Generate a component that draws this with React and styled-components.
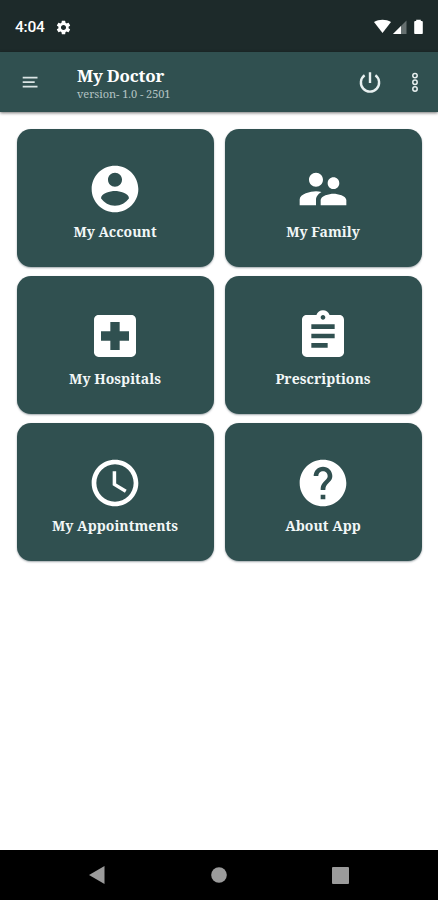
import React from "react";
import styled, { createGlobalStyle } from "styled-components";
import { MdHelp, MdAccessTime, MdAssignment, MdLocalHospital, MdSettings } from "react-icons/md";

const Global = createGlobalStyle`
  * { box-sizing: border-box; }
  body { margin: 0; background: #fff; }
`;
const serif = `"Noto Serif", "Droid Serif", "DejaVu Serif Condensed", "DejaVu Serif", serif`;

const Screen = styled.div`
  display: flex;
  flex-direction: column;
  width: 438px;
  height: 900px;
  overflow: hidden;
  background: #fff;
`;
const StatusBar = styled.header`
  display: flex;
  align-items: center;
  height: 52px;
  flex: none;
  padding: 2px 14px 0 15px;
  background: #1d2a2a;
  color: #fff;
`;
const Time = styled.span`
  width: 30px;
  margin-right: 10px;
  font: 500 15.5px/20px Roboto, sans-serif;
  letter-spacing: -0.2px;
  white-space: nowrap;
`;
const StatusIcons = styled.div`
  display: flex;
  align-items: center;
  margin-left: auto;
`;
const AppBar = styled.div`
  display: flex;
  align-items: center;
  height: 60px;
  flex: none;
  padding: 0 19px 0 22px;
  background: #305050;
  color: #e8f0f0;
  box-shadow: 0 1px 3px rgba(0, 0, 0, 0.55);
`;
const Titles = styled.div`
  margin-left: 39px;
  padding-top: 3px;
`;
const Title = styled.h1`
  margin: 0;
  font: bold 17px/20px ${serif};
  letter-spacing: -0.22px;
  color: #fff;
  white-space: nowrap;
`;
const Version = styled.div`
  font: 11px/16px ${serif};
  letter-spacing: -0.05px;
  color: #b4c3c3;
  white-space: nowrap;
`;
const Actions = styled.div`
  display: flex;
  align-items: center;
  gap: 28px;
  margin-left: auto;
`;
const Content = styled.main`
  flex: 1;
  padding: 17px 16.5px;
`;
const Grid = styled.div`
  display: grid;
  grid-template-columns: 1fr 1fr;
  grid-auto-rows: 138px;
  gap: 9px 11px;
`;
const Card = styled.button`
  display: flex;
  flex-direction: column;
  align-items: center;
  padding: 31.5px 0 0;
  border: 0;
  border-radius: 14px;
  background: #305050;
  color: #fff;
  box-shadow: 0 1px 2px rgba(20, 40, 50, 0.4);
`;
const CardLabel = styled.span`
  margin-top: 5.5px;
  font: bold 14px/20px ${serif};
  letter-spacing: 0.02px;
  color: #f2f7f7;
  white-space: nowrap;
`;
const NavBar = styled.nav`
  display: flex;
  align-items: center;
  justify-content: space-between;
  height: 50px;
  flex: none;
  padding: 0 89px 0 88px;
  background: #000;
`;

const path = (d) => () => (
  <svg width="56" height="56" viewBox="0 0 24 24" fill="currentColor"><path d={d} /></svg>
);
const Account = path("M12 2C6.48 2 2 6.48 2 12s4.48 10 10 10 10-4.48 10-10S17.52 2 12 2zm0 3c1.66 0 3 1.34 3 3s-1.34 3-3 3-3-1.34-3-3 1.34-3 3-3zm0 14.2c-2.5 0-4.71-1.28-6-3.22.03-1.99 4-3.08 6-3.08 1.99 0 5.97 1.09 6 3.08-1.29 1.94-3.5 3.22-6 3.22z");
const Family = path("M16.5 12c1.38 0 2.49-1.12 2.49-2.5S17.88 7 16.5 7C15.12 7 14 8.12 14 9.5s1.12 2.5 2.5 2.5zM9 11c1.66 0 2.99-1.34 2.99-3S10.66 5 9 5C7.34 5 6 6.34 6 8s1.34 3 3 3zm7.5 3c-1.83 0-5.5.92-5.5 2.75V19h11v-2.25c0-1.83-3.67-2.75-5.5-2.75zM9 13c-2.33 0-7 1.17-7 3.5V19h7v-2.25c0-.85.33-2.34 2.37-3.47C10.5 13.1 9.66 13 9 13z");

const items = [
  { label: "My Account", Icon: Account },
  { label: "My Family", Icon: Family },
  { label: "My Hospitals", Icon: MdLocalHospital },
  { label: "Prescriptions", Icon: MdAssignment },
  { label: "My Appointments", Icon: MdAccessTime },
  { label: "About App", Icon: MdHelp },
];

export default function App() {
  return (
    <Screen>
      <Global />
      <StatusBar>
        <Time>4:04</Time>
        <MdSettings size={17} />
        <StatusIcons>
          <svg width="50" height="16" viewBox="0 0 50 16">
            <path d="M0 3C5 0 12 0 17 3L8.500 14z" fill="#fff" />
            <path d="M19 15L32.500 1.500V15z" fill="#667070" />
            <path d="M19 15L27 7V15z" fill="#fff" />
            <path d="M40.200 3q0-1 1-1h1V.8h4.600V2h1q1 0 1 1v11.200q0 .8-.8.8h-7q-.8 0-.8-.8z" fill="#fff" />
          </svg>
        </StatusIcons>
      </StatusBar>
      <AppBar>
        <svg width="16" height="12" viewBox="0 0 16 12" stroke="#dbe5e5" strokeWidth="1.8">
          <path d="M.7 1.700H15.500M.7 6.200H12.700M.7 10.700H15.500" />
        </svg>
        <Titles>
          <Title>My Doctor</Title>
          <Version>version- 1.0 - 2501</Version>
        </Titles>
        <Actions>
          <svg width="26" height="26" viewBox="0 0 26 26" fill="none" stroke="currentColor" strokeWidth="2.4">
            <path d="M13 3.300V14M7.600 6.200A9.100 9.100 0 1 0 18.400 6.200" />
          </svg>
          <svg width="8" height="22" viewBox="0 0 8 22" fill="none" stroke="currentColor" strokeWidth="1.5">
            <circle cx="4" cy="4.600" r="2.200" />
            <circle cx="4" cy="11.300" r="2.200" />
            <circle cx="4" cy="18" r="2.200" />
          </svg>
        </Actions>
      </AppBar>
      <Content>
        <Grid>
          {items.map(({ label, Icon }) => (
            <Card key={label}>
              <Icon size={56} />
              <CardLabel>{label}</CardLabel>
            </Card>
          ))}
        </Grid>
      </Content>
      <NavBar>
        <svg width="17" height="20" viewBox="0 0 17 20" fill="#9b9b9b"><path d="M1 10L16.500 1V19z" /></svg>
        <svg width="16" height="16" viewBox="0 0 16 16" fill="#9b9b9b"><circle cx="8" cy="8" r="7.800" /></svg>
        <svg width="17" height="17" viewBox="0 0 17 17" fill="#9b9b9b"><rect width="17" height="17" rx="1" /></svg>
      </NavBar>
    </Screen>
  );
}
